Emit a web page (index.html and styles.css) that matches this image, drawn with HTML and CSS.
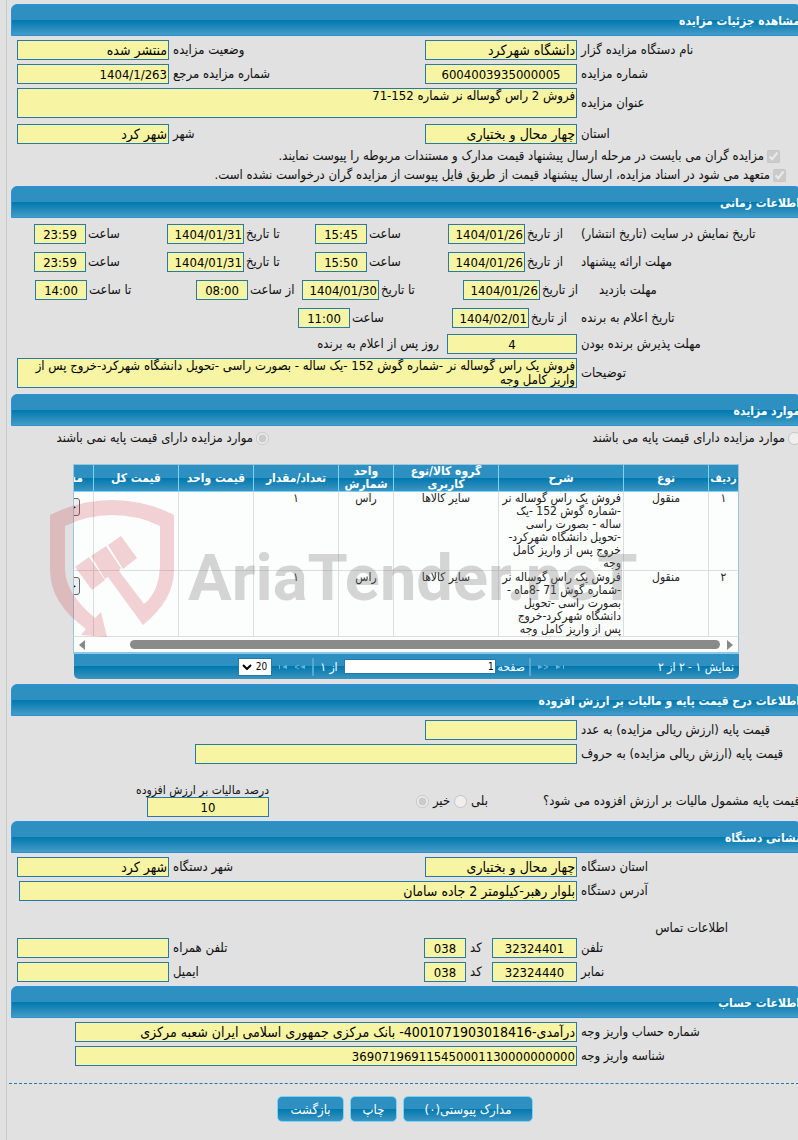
FILE: index.html
```html
<!DOCTYPE html>
<html lang="fa" dir="rtl">
<head>
<meta charset="utf-8">
<title>مشاهده جزئیات مزایده</title>
<link rel="stylesheet" href="styles.css">
</head>
<body>
<main class="page">
  <section class="section">
    <h2 class="bar">مشاهده جزئیات مزایده</h2>
    <div class="rows">
      <div class="row"><label class="name" for="org">نام دستگاه مزایده گزار</label><input class="field w-m txt" id="org" value="دانشگاه شهرکرد" readonly><label class="name2" for="status">وضعیت مزایده</label><input class="field w-m txt" id="status" value="منتشر شده" readonly></div>
      <div class="row"><label class="name" for="num">شماره مزایده</label><input class="field w-m mid" id="num" value="6004003935000005" readonly><label class="name2" for="ref">شماره مزایده مرجع</label><input class="field w-m" id="ref" value="1404/1/263" readonly></div>
      <div class="row"><label class="name" for="title">عنوان مزایده</label><textarea class="field area" id="title" readonly>فروش 2 راس گوساله نر شماره 152-71</textarea></div>
      <div class="row spaced"><label class="name" for="prov">استان</label><input class="field w-m txt" id="prov" value="چهار محال و بختیاری" readonly><label class="name2" for="city">شهر</label><input class="field w-m txt" id="city" value="شهر کرد" readonly></div>
    </div>
    <div class="checks">
      <label class="check c1"><input type="checkbox" checked disabled>مزایده گران می بایست در مرحله ارسال پیشنهاد قیمت مدارک و مستندات مربوطه را پیوست نمایند.</label>
      <label class="check c2"><input type="checkbox" checked disabled>متعهد می شود در اسناد مزایده، ارسال پیشنهاد قیمت از طریق فایل پیوست از مزایده گران درخواست نشده است.</label>
    </div>
  </section>

  <section class="section">
    <h2 class="bar">اطلاعات زمانی</h2>
    <div class="rows times">
      <div class="row t1"><span class="lead">تاریخ نمایش در سایت (تاریخ انتشار)</span><label for="d1">از تاریخ</label><input class="field" id="d1" value="1404/01/26" readonly><label for="h1">ساعت</label><input class="field mid" id="h1" value="15:45" readonly><label for="d2">تا تاریخ</label><input class="field" id="d2" value="1404/01/31" readonly><label for="h2">ساعت</label><input class="field mid" id="h2" value="23:59" readonly></div>
      <div class="row t1"><span class="lead">مهلت ارائه پیشنهاد</span><label for="d3">از تاریخ</label><input class="field" id="d3" value="1404/01/26" readonly><label for="h3">ساعت</label><input class="field mid" id="h3" value="15:50" readonly><label for="d4">تا تاریخ</label><input class="field" id="d4" value="1404/01/31" readonly><label for="h4">ساعت</label><input class="field mid" id="h4" value="23:59" readonly></div>
      <div class="row t2"><span class="lead">مهلت بازدید</span><label for="d5">از تاریخ</label><input class="field" id="d5" value="1404/01/26" readonly><label for="d6">تا تاریخ</label><input class="field" id="d6" value="1404/01/30" readonly><label for="h5">از ساعت</label><input class="field mid" id="h5" value="08:00" readonly><label for="h6">تا ساعت</label><input class="field mid" id="h6" value="14:00" readonly></div>
      <div class="row t3"><span class="lead">تاریخ اعلام به برنده</span><label for="d7">از تاریخ</label><input class="field" id="d7" value="1404/02/01" readonly><label for="h7">ساعت</label><input class="field mid" id="h7" value="11:00" readonly></div>
    </div>
    <div class="rows tight">
      <div class="row"><label class="name" for="days">مهلت پذیرش برنده بودن</label><input class="field w-days mid" id="days" value="4" readonly><span class="after">روز پس از اعلام به برنده</span></div>
      <div class="row"><label class="name" for="desc">توضیحات</label><textarea class="field area" id="desc" readonly>فروش یک راس گوساله نر -شماره گوش 152 -یک ساله - بصورت راسی -تحویل دانشگاه شهرکرد-خروج پس از واریز کامل وجه</textarea></div>
    </div>
  </section>

  <section class="section">
    <h2 class="bar">موارد مزایده</h2>
    <div class="choice">
      <label class="opt"><input type="radio" name="base" disabled>موارد مزایده دارای قیمت پایه می باشند</label>
      <label class="opt"><input type="radio" name="base" checked disabled>موارد مزایده دارای قیمت پایه نمی باشند</label>
    </div>
    <div class="grid">
      <div class="view">
        <table class="items">
          <colgroup><col class="k1"><col class="k2"><col class="k3"><col class="k4"><col class="k5"><col class="k2"><col class="k6"><col class="k2"><col class="k2"></colgroup>
          <thead><tr><th>ردیف</th><th>نوع</th><th>شرح</th><th>گروه کالا/نوع<br>کاربری</th><th>واحد<br>شمارش</th><th>تعداد/مقدار</th><th>قیمت واحد</th><th>قیمت کل</th><th class="edge">مشخصات</th></tr></thead>
          <tbody>
            <tr><td>۱</td><td>منقول</td><td class="desc">فروش یک راس گوساله نر<br>-شماره گوش 152 -یک<br>ساله - بصورت راسی<br>-تحویل دانشگاه شهرکرد-<br>خروج پس از واریز کامل<br>وجه</td><td>سایر کالاها</td><td>راس</td><td>۱</td><td></td><td></td><td class="edge"><button class="more" type="button">جزئیات</button></td></tr>
            <tr><td>۲</td><td>منقول</td><td class="desc">فروش یک راس گوساله نر<br>-شماره گوش 71 -8ماه -<br>بصورت راسی -تحویل<br>دانشگاه شهرکرد-خروج<br>پس از واریز کامل وجه</td><td>سایر کالاها</td><td>راس</td><td>۱</td><td></td><td></td><td class="edge"><button class="more" type="button">جزئیات</button></td></tr>
          </tbody>
        </table>
        <div class="scroll">
          <svg width="6" height="10" viewBox="0 0 6 10"><path d="M0 0L6 5L0 10Z" fill="#888"/></svg>
          <span class="thumb"></span>
          <svg width="6" height="10" viewBox="0 0 6 10"><path d="M6 0L0 5L6 10Z" fill="#888"/></svg>
        </div>
      </div>
      <div class="pager">
        <span class="info">نمایش ۱ - ۲ از ۲</span>
        <button class="nav" type="button" aria-label="اولین"><svg width="10" height="6" viewBox="0 0 10 6"><path d="M1 1L6 3L1 5Z M8 1h1v4h-1Z" fill="#6cb3d6"/></svg></button>
        <button class="nav" type="button" aria-label="قبلی"><svg width="12" height="6" viewBox="0 0 12 6"><path d="M1 1L6 3L1 5Z" fill="#6cb3d6"/><path d="M7 1L11 3L7 5" fill="none" stroke="#6cb3d6"/></svg></button>
        <span class="sep"></span>
        <label for="pg">صفحه</label><input class="pg" id="pg" value="1">
        <span>از ۱</span>
        <span class="sep"></span>
        <button class="nav" type="button" aria-label="بعدی"><svg width="12" height="6" viewBox="0 0 12 6"><path d="M11 1L6 3L11 5Z" fill="#6cb3d6"/><path d="M5 1L1 3L5 5" fill="none" stroke="#6cb3d6"/></svg></button>
        <button class="nav" type="button" aria-label="آخرین"><svg width="10" height="6" viewBox="0 0 10 6"><path d="M9 1L4 3L9 5Z M1 1h1v4h-1Z" fill="#6cb3d6"/></svg></button>
        <span class="sel"><select class="size" aria-label="تعداد در صفحه"><option>20</option></select><svg width="10" height="6" viewBox="0 0 10 6"><path d="M1 1L5 5L9 1" fill="none" stroke="#000" stroke-width="2"/></svg></span>
      </div>
      <svg class="mark" width="600" height="140" viewBox="50 500 600 140" direction="ltr">
        <path fill="#c8232c" fill-opacity=".2" d="M50 515Q80 500 112 500Q145 500 174 515V570Q174 600 143 625L108 577L105 579L91 556L106 546L121 568L119 571L144 604Q159 592 160 566V526Q138 515 112 515Q88 515 65 526V570Q66 594 95 618L101 612L107 637L81 635L86 629Q50 603 50 570Z"/>
        <path fill="#c8232c" fill-opacity=".2" d="M108 545L121 536L137 558L123 569ZM75 567L89 557L105 580L92 590Z"/>
        <text class="marktext" x="188" y="600">AriaTender.neT</text>
      </svg>
    </div>
  </section>

  <section class="section">
    <h2 class="bar">اطلاعات درج قیمت پایه و مالیات بر ارزش افزوده</h2>
    <div class="rows">
      <div class="row"><label class="name" for="p1">قیمت پایه (ارزش ریالی مزایده) به عدد</label><input class="field w-price" id="p1" readonly></div>
      <div class="row"><label class="name" for="p2">قیمت پایه (ارزش ریالی مزایده) به حروف</label><input class="field w-words" id="p2" readonly></div>
    </div>
    <div class="vat">
      <span class="ask">قیمت پایه مشمول مالیات بر ارزش افزوده می شود؟</span>
      <span class="answers"><label for="yes">بلی</label><input id="yes" type="radio" name="vat" disabled><label for="no">خیر</label><input id="no" type="radio" name="vat" checked disabled></span>
      <span class="rate"><label for="rate">درصد مالیات بر ارزش افزوده</label><input class="field mid" id="rate" value="10" readonly></span>
    </div>
  </section>

  <section class="section">
    <h2 class="bar">نشانی دستگاه</h2>
    <div class="rows">
      <div class="row"><label class="name" for="op">استان دستگاه</label><input class="field w-m txt" id="op" value="چهار محال و بختیاری" readonly><label class="name2" for="oc">شهر دستگاه</label><input class="field w-m txt" id="oc" value="شهر کرد" readonly></div>
      <div class="row"><label class="name" for="addr">آدرس دستگاه</label><input class="field wide txt" id="addr" value="بلوار رهبر-کیلومتر 2 جاده سامان" readonly></div>
    </div>
    <h3 class="sub">اطلاعات تماس</h3>
    <div class="rows contact">
      <div class="row"><label class="name" for="tel">تلفن</label><input class="field w-tel mid" id="tel" value="32324401" readonly><label class="code" for="c1">کد</label><input class="field w-code mid" id="c1" value="038" readonly><label class="name2" for="mob">تلفن همراه</label><input class="field w-m" id="mob" readonly></div>
      <div class="row"><label class="name" for="fax">نمابر</label><input class="field w-tel mid" id="fax" value="32324440" readonly><label class="code" for="c2">کد</label><input class="field w-code mid" id="c2" value="038" readonly><label class="name2" for="mail">ایمیل</label><input class="field w-m" id="mail" readonly></div>
    </div>
  </section>

  <section class="section">
    <h2 class="bar">اطلاعات حساب</h2>
    <div class="rows">
      <div class="row"><label class="name" for="acc">شماره حساب واریز وجه</label><input class="field w-acc txt" id="acc" value="درآمدی-4001071903018416- بانک مرکزی جمهوری اسلامی ایران شعبه مرکزی" readonly></div>
      <div class="row"><label class="name" for="pid">شناسه واریز وجه</label><input class="field w-acc" id="pid" value="369071969115450001130000000000" readonly></div>
    </div>
  </section>

  <div class="actions">
    <button class="btn b1" type="button">مدارک پیوستی(۰)</button>
    <button class="btn b2" type="button">چاپ</button>
    <button class="btn b3" type="button">بازگشت</button>
  </div>
</main>
</body>
</html>
```
FILE: styles.css
```css
* { box-sizing: border-box; }
html { background: #e1e1e1; }
body { margin: 0; overflow-x: hidden; color: #111; font: 13px/16px "DejaVu Sans Condensed", "DejaVu Sans", sans-serif; }
input, textarea, button, select { margin: 0; font-family: inherit; }
.page { margin: 0 -3px 0 6px; padding: 4px 0 19px 0; border-left: 1px solid #c8c8c8; white-space: nowrap; }
.bar {
  height: 32px; margin: 0 0 0 4px; padding: 0; border: 1px solid #2a92dd; border-radius: 6px 6px 0 0;
  background: linear-gradient(#2e90c0 0 50%, #0078ae 50%, #459cc6 100%);
  color: #fff; font-size: 12px; font-weight: bold; line-height: 32px;
}
.rows { display: flex; flex-direction: column; gap: 4px; padding: 4px 0 4px 10px; }
.row { display: flex; align-items: center; gap: 4px; }
.spaced { margin-top: 2px; }
.name { flex: 0 0 220px; text-align: left; }
.name2 { flex: 1; text-align: left; }
.field { height: 20px; min-width: 0; padding: 0 1px; border: 1px solid #2779aa; border-radius: 0; background: #f7f4a4; color: #000; font-size: 13px; outline: 0; }
.txt { font-size: 14px; }
.mid { text-align: center; }
.w-m { flex: 0 0 152px; }
.w-price { flex: 0 0 152px; }
.w-days { flex: 0 0 130px; }
.w-words { flex: 0 0 382px; }
.w-tel { flex: 0 0 85px; }
.w-code { flex: 0 0 42px; }
.w-acc { flex: 0 0 502px; }
.wide { flex: 1; margin-left: 2px; }
.area { flex: 1; height: 30px; resize: none; overflow: hidden; font-size: 13px; line-height: 14px; }
.code { flex: 0 0 18px; text-align: left; }
.after { padding-right: 4px; }

.checks { display: flex; flex-direction: column; gap: 3px; padding-bottom: 3px; }
.check { display: flex; align-items: center; gap: 3px; height: 16px; }
.check input, .opt input, .answers input { width: 13px; height: 13px; }
.c1 { padding-right: 21px; }
.c2 { padding-right: 15px; }

.times { gap: 8px; padding-top: 6px; padding-bottom: 6px; }
.times .row { display: grid; gap: 0; }
.times label, .lead { padding-left: 2px; text-align: left; }
.lead { padding-left: 0; }
.t1 { grid-template-columns: 220px 56px 77px 81px 52px 71px 77px 81px 52px; }
.t2 { grid-template-columns: 202px 59px 77px 84px 77px 54px 52px 109px 52px; }
.t3 { grid-template-columns: 220px 52px 77px 102px 52px; }
.tight { padding-top: 0; padding-bottom: 6px; }

.choice { display: grid; grid-template-columns: 532px 1fr; padding-top: 3px; }
.opt { display: flex; align-items: center; gap: 3px; height: 18px; }
.grid { position: relative; max-width: 667px; margin: 17px 62px 5px 66px; }
.view { overflow: hidden; border: 1px solid #9ac6e0; border-bottom: 2px solid #8cc8ea; background: #fcfdfd; }
.items { width: 730px; table-layout: fixed; border-collapse: separate; border-spacing: 0; }
.k1 { width: 30px; } .k2 { width: 85px; } .k3 { width: 125px; } .k4 { width: 105px; } .k5 { width: 55px; } .k6 { width: 75px; }
.items th { height: 27px; padding: 0; border-left: 1px solid #77d5f7; border-bottom: 1px solid #77d5f7; background: linear-gradient(#2e90c0 0 50%, #0078ae 50%, #3d94c0 100%); color: #fff; font-size: 12px; line-height: 13px; }
.items th:first-child { font-size: 11px; }
.items td { padding: 0 2px; border-left: 1px solid #ddd; border-bottom: 1px solid #ddd; color: #222; font-size: 12px; line-height: 13px; text-align: center; vertical-align: top; }
.items .desc { text-align: right; }
.items .edge { padding-right: 10px; text-align: right; }
.items td.edge { padding-right: 13px; }
.more { margin-top: 6px; height: 18px; padding: 0 3px; border: 1px solid #666; border-radius: 3px; background: #efefef; font-size: 11px; line-height: 14px; }
.scroll { display: flex; align-items: center; gap: 7px; height: 15px; padding: 0 5px; }
.thumb { flex: 1; height: 9px; margin-left: 38px; border-radius: 5px; background: #8a8a8a; }
.pager { display: flex; align-items: center; gap: 6px; height: 25px; margin-left: 1px; padding-right: 5px; border-radius: 0 0 5px 5px; background: linear-gradient(#2e90c0 0 50%, #0078ae 50%, #3d94c0 100%); color: #fff; font-size: 12px; }
.info { flex: 0 0 163px; }
.nav { display: flex; padding: 0; border: 0; background: none; }
.sep { width: 2px; height: 18px; background: #5aa6cc; }
.pager label { margin: 0 -2px 0 -4px; }
.pg { width: 152px; height: 15px; padding: 0 1px; border: 1px solid #2779aa; font-size: 10px; }
.sel { position: relative; display: flex; }
.size { appearance: none; width: 34px; height: 18px; padding: 0 4px; border: 1px solid #2779aa; border-radius: 0; background: #fff; font-size: 10px; }
.sel svg { position: absolute; left: 4px; top: 6px; }
.mark { position: absolute; left: -23px; top: 36px; pointer-events: none; }
.marktext { font: bold 65px Roboto, sans-serif; fill: #777; fill-opacity: .3; }

.vat { display: flex; align-items: flex-start; height: 53px; padding-top: 15px; }
.ask { flex: 0 0 313px; padding: 10px 1px 0 0; }
.answers { display: flex; flex: 0 0 219px; align-items: center; gap: 4px; padding-top: 10px; }
.rate { display: flex; flex-direction: column; }
.rate .field { width: 122px; }
.rate label { height: 14px; font-size: 12px; line-height: 14px; }
.sub { margin: 15px 0 0; padding-right: 73px; font-size: 13px; font-weight: normal; }
.contact { padding-top: 2px; }
.actions { display: flex; justify-content: center; gap: 6px; margin: 13px 2px 0; padding: 12px 0 0 2px; border-top: 1px dashed #2779aa; }
.btn { height: 26px; padding: 0; border: 1px solid #77d5f7; border-radius: 5px; background: linear-gradient(#2e90c0 0 50%, #0078ae 50%, #3d94c0 100%); color: #fff; font-size: 13px; }
.b1 { width: 130px; } .b2 { width: 47px; } .b3 { width: 67px; }
```
